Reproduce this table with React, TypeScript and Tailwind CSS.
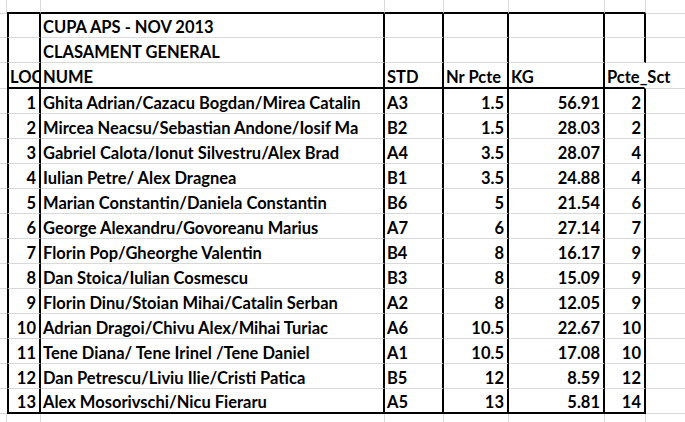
import React from "react";

type Row = { loc: string; name: string; std: string; nr: string; kg: string; pct: string };

const rows: Row[] = [
  { loc: "1", name: "Ghita Adrian/Cazacu Bogdan/Mirea Catalin", std: "A3", nr: "1.5", kg: "56.91", pct: "2" },
  { loc: "2", name: "Mircea Neacsu/Sebastian Andone/Iosif Ma", std: "B2", nr: "1.5", kg: "28.03", pct: "2" },
  { loc: "3", name: "Gabriel Calota/Ionut Silvestru/Alex Brad", std: "A4", nr: "3.5", kg: "28.07", pct: "4" },
  { loc: "4", name: "Iulian Petre/ Alex Dragnea", std: "B1", nr: "3.5", kg: "24.88", pct: "4" },
  { loc: "5", name: "Marian Constantin/Daniela Constantin", std: "B6", nr: "5", kg: "21.54", pct: "6" },
  { loc: "6", name: "George Alexandru/Govoreanu Marius", std: "A7", nr: "6", kg: "27.14", pct: "7" },
  { loc: "7", name: "Florin Pop/Gheorghe Valentin", std: "B4", nr: "8", kg: "16.17", pct: "9" },
  { loc: "8", name: "Dan Stoica/Iulian Cosmescu", std: "B3", nr: "8", kg: "15.09", pct: "9" },
  { loc: "9", name: "Florin Dinu/Stoian Mihai/Catalin Serban", std: "A2", nr: "8", kg: "12.05", pct: "9" },
  { loc: "10", name: "Adrian Dragoi/Chivu Alex/Mihai Turiac", std: "A6", nr: "10.5", kg: "22.67", pct: "10" },
  { loc: "11", name: "Tene Diana/ Tene Irinel /Tene Daniel", std: "A1", nr: "10.5", kg: "17.08", pct: "10" },
  { loc: "12", name: "Dan Petrescu/Liviu Ilie/Cristi Patica", std: "B5", nr: "12", kg: "8.59", pct: "12" },
  { loc: "13", name: "Alex Mosorivschi/Nicu Fieraru", std: "A5", nr: "13", kg: "5.81", pct: "14" },
];

const cellBase = "flex items-end overflow-hidden whitespace-nowrap pb-[2px] leading-[15px]";

function Cell({ className, children }: { className: string; children?: React.ReactNode }) {
  return <div className={`${cellBase} ${className}`}>{children}</div>;
}

export default function App() {
  const lightB = "border-b border-b-[#d9d9d9]";
  const blackB = "border-b-2 border-b-black";
  const lightR = "border-r border-r-[#d9d9d9]";
  const blackR = "border-r-2 border-r-black";
  const blackL = "border-l-2 border-l-black";

  const header = (idx: number, bottom: string) => {
    const texts = [
      ["", "CUPA APS - NOV 2013", "", "", "", ""],
      ["", "CLASAMENT GENERAL", "", "", "", ""],
      ["LOC", "NUME", "STD", "Nr Pcte", "KG", "Pcte_Sct"],
    ][idx];
    const last = idx === 2;
    return (
      <React.Fragment key={`h${idx}`}>
        <Cell className={`${lightB}`} />
        <Cell className={`${blackL} ${blackR} ${bottom} pl-[1px]`}>{texts[0]}</Cell>
        <Cell className={`${blackR} ${bottom} pl-[2px]`}>{texts[1]}</Cell>
        <Cell className={`${blackR} ${bottom} pl-[2px]`}>{texts[2]}</Cell>
        <Cell className={`${blackR} ${bottom} pl-[2px]`}>{texts[3]}</Cell>
        <Cell className={`${blackR} ${bottom} pl-[2px]`}>{texts[4]}</Cell>
        {last ? (
          <div className={`flex items-end whitespace-nowrap pb-[2px] leading-[15px] overflow-visible border-r-2 border-r-transparent ${bottom} pl-[2px] relative z-10`}>
            {texts[5]}
          </div>
        ) : (
          <Cell className={`${blackR} ${bottom}`} />
        )}
        <Cell className={`${lightB}`} />
      </React.Fragment>
    );
  };

  return (
    <div
      className="w-[685px] h-[422px] bg-white overflow-hidden text-black font-bold text-[16.5px]"
      style={{ fontFamily: "Lato, 'Open Sans', sans-serif" }}
    >
      <div className="grid h-full grid-cols-[7px_34px_344px_59px_65px_96px_41px_1fr] grid-rows-[14px_24px_25px_26px_repeat(13,25px)_1fr]">
        {/* top strip */}
        <div className={`${lightR} ${lightB}`} />
        <div className={`${lightR} ${blackB}`} />
        <div className={`${lightR} ${blackB}`} />
        <div className={`${lightR} ${blackB}`} />
        <div className={`${lightR} ${blackB}`} />
        <div className={`${lightR} ${blackB}`} />
        <div className={`${lightR} ${blackB}`} />
        <div className={`${lightB}`} />

        {header(0, lightB)}
        {header(1, lightB)}
        {header(2, blackB)}

        {rows.map((r, i) => {
          const bottom = i === rows.length - 1 ? blackB : lightB;
          return (
            <React.Fragment key={r.loc}>
              <Cell className={`${lightB}`} />
              <Cell className={`${blackL} ${blackR} ${bottom} justify-end pr-[3px]`}>{r.loc}</Cell>
              <Cell className={`${blackR} ${bottom} pl-[2px]`}>{r.name}</Cell>
              <Cell className={`${blackR} ${bottom} pl-[2px]`}>{r.std}</Cell>
              <Cell className={`${blackR} ${bottom} justify-end pr-[3px]`}>{r.nr}</Cell>
              <Cell className={`${blackR} ${bottom} justify-end pr-[3px]`}>{r.kg}</Cell>
              <Cell className={`${blackR} ${bottom} justify-end pr-[3px]`}>{r.pct}</Cell>
              <Cell className={`${lightB}`} />
            </React.Fragment>
          );
        })}

        {/* bottom strip */}
        <div className={`${lightR}`} />
        <div className={`${lightR}`} />
        <div className={`${lightR}`} />
        <div className={`${lightR}`} />
        <div className={`${lightR}`} />
        <div className={`${lightR}`} />
        <div className={`${lightR}`} />
        <div />
      </div>
    </div>
  );
}
